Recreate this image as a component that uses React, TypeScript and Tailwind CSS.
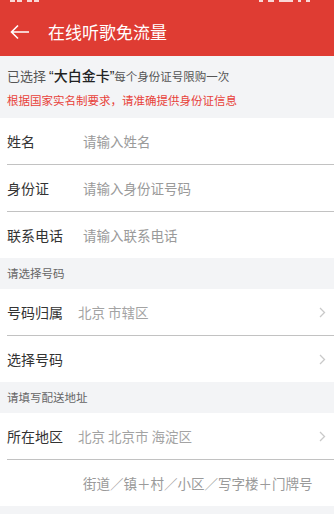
import React from 'react';

const font = { fontFamily: '"Noto Sans CJK SC", "Noto Sans", sans-serif' };

function Chevron() {
  return (
    <svg width="7" height="11" viewBox="0 0 7 11" className="shrink-0">
      <path d="M1 1l4.5 4.5L1 10" fill="none" stroke="#c9c9c9" strokeWidth="1.3" />
    </svg>
  );
}

function Divider() {
  return <div className="ml-[7px] h-px bg-[#c2c2c2]" />;
}

function InputRow({ label, placeholder }: { label: string; placeholder: string }) {
  return (
    <div className="flex h-[46px] items-center pl-[7px]">
      <span className="w-[76px] shrink-0 text-[14px] text-[#333]">{label}</span>
      <span className="text-[13.5px] text-[#9a9a9a]">{placeholder}</span>
    </div>
  );
}

function SelectRow({ label, value }: { label: string; value?: string }) {
  return (
    <div className="flex h-[46px] items-center pl-[7px] pr-[8px]">
      <span className="w-[71px] shrink-0 text-[14px] text-[#333]">{label}</span>
      <span className="flex-1 text-[13.5px] text-[#a3a3a3]">{value}</span>
      <Chevron />
    </div>
  );
}

function SectionTitle({ children }: { children: React.ReactNode }) {
  return (
    <div className="flex h-[31px] items-center bg-[#f3f4f6] pl-[7px] text-[11.5px] text-[#666]">
      {children}
    </div>
  );
}

export default function App() {
  return (
    <div className="min-h-[523px] w-[334px] overflow-hidden bg-white" style={font}>
      {/* Header */}
      <div className="bg-[#df3c33]">
        {/* status bar, mostly scrolled off */}
        <div className="flex h-[8px] items-start justify-between px-[10px]">
          <div className="flex gap-[2px]">
            <div className="h-[2px] w-[5px] bg-white/80" />
            <div className="h-[2px] w-[5px] bg-white/80" />
            <div className="ml-[3px] h-[2px] w-[5px] bg-white/80" />
            <div className="h-[2px] w-[5px] bg-white/80" />
          </div>
          <div className="mr-[14px] flex gap-[5px]">
            <div className="h-[2px] w-[4px] bg-white/80" />
            <div className="h-[2px] w-[6px] bg-white/80" />
            <div className="h-[2px] w-[14px] bg-white/80" />
            <div className="h-[2px] w-[3px] bg-white/80" />
            <div className="h-[2px] w-[4px] bg-white/80" />
          </div>
        </div>
        <div className="flex h-[48px] items-center">
          <svg width="20" height="16" viewBox="0 0 20 16" className="ml-[10px]">
            <path d="M19 8H2M8 1.5L1.5 8 8 14.5" fill="none" stroke="#fff" strokeWidth="1.6" />
          </svg>
          <span className="ml-[18px] text-[17px] text-white">在线听歌免流量</span>
        </div>
      </div>

      {/* Notice */}
      <div className="flex h-[62px] flex-col justify-center gap-[5px] bg-[#f3f4f6] pl-[7px] pt-[1px]">
        <div className="flex items-baseline text-[#555]">
          <span className="text-[13px]">已选择</span>
          <span className="ml-[3px] text-[14px] font-medium text-[#222]">
            <span style={{ fontFamily: '"Liberation Sans", sans-serif' }}>“</span>大白金卡
            <span style={{ fontFamily: '"Liberation Sans", sans-serif' }}>”</span>
          </span>
          <span className="text-[11.5px]">每个身份证号限购一次</span>
        </div>
        <div className="text-[11.5px] text-[#e8423a]">根据国家实名制要求，请准确提供身份证信息</div>
      </div>

      {/* Identity */}
      <div className="bg-white">
        <InputRow label="姓名" placeholder="请输入姓名" />
        <Divider />
        <InputRow label="身份证" placeholder="请输入身份证号码" />
        <Divider />
        <InputRow label="联系电话" placeholder="请输入联系电话" />
      </div>

      <SectionTitle>请选择号码</SectionTitle>
      <div className="bg-white">
        <SelectRow label="号码归属" value="北京 市辖区" />
        <Divider />
        <SelectRow label="选择号码" />
      </div>

      <SectionTitle>请填写配送地址</SectionTitle>
      <div className="bg-white">
        <SelectRow label="所在地区" value="北京 北京市 海淀区" />
        <Divider />
        <div className="flex h-[46px] items-center pl-[83px] text-[13.5px] text-[#9a9a9a]">
          街道／镇＋村／小区／写字楼＋门牌号
        </div>
      </div>
      <div className="h-[8px] bg-[#f3f4f6]" />
    </div>
  );
}
